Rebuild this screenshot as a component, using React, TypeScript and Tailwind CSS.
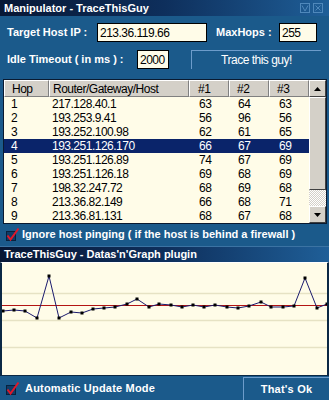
import React from "react";

const rows: [number, string, number, number, number][] = [
  [1, "217.128.40.1", 63, 64, 63],
  [2, "193.253.9.41", 56, 96, 56],
  [3, "193.252.100.98", 62, 61, 65],
  [4, "193.251.126.170", 66, 67, 69],
  [5, "193.251.126.89", 74, 67, 69],
  [6, "193.251.126.18", 69, 68, 69],
  [7, "198.32.247.72", 68, 69, 68],
  [8, "213.36.82.149", 66, 68, 71],
  [9, "213.36.81.131", 68, 67, 68],
];

const pts: [number, number][] = [
  [3, 312], [14, 311], [25, 312], [37, 319], [49, 277], [59, 319], [71, 313], [82, 314],
  [93, 310], [104, 309], [115, 308], [127, 305], [137, 300], [149, 308], [159, 305],
  [171, 306], [182, 308], [193, 306], [204, 308], [215, 306], [227, 308], [238, 309],
  [249, 307], [261, 303], [271, 308], [283, 308], [294, 307], [305, 279], [317, 309], [327, 305],
];

function Check() {
  return (
    <svg width="15" height="15" viewBox="0 0 15 15" className="shrink-0">
      <rect x="1.5" y="4.5" width="9" height="9" fill="#0f3c68" stroke="#08223e" />
      <path d="M2.5 8.5 L5.5 12.5 L13.5 1.5" fill="none" stroke="#e0182a" strokeWidth="2" />
    </svg>
  );
}

function Cell({ w, children, cls = "" }: { w: string; children: React.ReactNode; cls?: string }) {
  return <div className={`${w} shrink-0 overflow-hidden whitespace-nowrap ${cls}`}>{children}</div>;
}

export default function App() {
  const ox = 2;
  const oy = 264;
  const poly = pts.map(([x, y]) => `${x - ox},${y - oy}`).join(" ");
  return (
    <div className="w-[329px] h-[400px] bg-[#1b5a8b] flex flex-col font-['Liberation_Sans',Arial,sans-serif] text-white overflow-hidden">
      {/* Title bar */}
      <div className="h-[16px] shrink-0 flex items-center bg-linear-to-r from-[#071735] via-[#0e2f5c] to-[#1f5f98] pl-[4px] pr-[6px]">
        <span className="text-[11px] font-bold leading-none">Manipulator - TraceThisGuy</span>
        <div className="ml-auto flex gap-[3px]">
          <svg width="10" height="10" viewBox="0 0 10 10">
            <rect x="0.5" y="0.5" width="9" height="9" fill="none" stroke="#4f88bb" />
            <path d="M2 2.5 L5 8 L8 2.5" fill="none" stroke="#4f88bb" />
          </svg>
          <svg width="10" height="10" viewBox="0 0 10 10">
            <rect x="0.5" y="0.5" width="9" height="9" fill="none" stroke="#4f88bb" />
            <path d="M2.5 2.5 L7.5 7.5 M7.5 2.5 L2.5 7.5" fill="none" stroke="#4f88bb" />
          </svg>
        </div>
      </div>

      {/* Row 1 */}
      <div className="mt-[7px] h-[19px] shrink-0 flex items-center pl-[7px]">
        <span className="w-[90px] text-[11px] font-bold leading-none">Target Host IP :</span>
        <div className="w-[110px] h-[19px] bg-[#fffce8] border border-black text-black text-[12px] tracking-[-0.5px] pl-[2px] flex items-center">
          213.36.119.66
        </div>
        <span className="ml-[9px] w-[63px] text-[11px] font-bold leading-none">MaxHops :</span>
        <div className="w-[38px] h-[19px] bg-[#fffce8] border border-black text-black text-[12px] tracking-[-0.5px] pl-[2px] flex items-center">
          255
        </div>
      </div>

      {/* Row 2 */}
      <div className="mt-[8px] h-[19px] shrink-0 flex items-center pl-[7px]">
        <span className="w-[130px] text-[11px] font-bold leading-none">Idle Timeout ( in ms ) :</span>
        <div className="w-[32px] h-[19px] bg-[#fffce8] border border-black text-black text-[12px] tracking-[-0.5px] pl-[2px] flex items-center">
          2000
        </div>
        <div className="ml-[22px] w-[130px] h-[19px] border-t border-l border-[#6d9ccb] flex items-center justify-center text-[12px] tracking-[-0.5px]">
          Trace this guy!
        </div>
      </div>

      {/* List */}
      <div className="mt-[10px] ml-[3px] w-[324px] h-[145px] shrink-0 border border-[#0a1a30] bg-[#fffce8] flex text-[12px] tracking-[-0.5px] text-black leading-none">
        <div className="w-[305px] flex flex-col">
          <div className="h-[17px] flex">
            {[
              ["w-[45px]", "Hop", "pl-[7px]"],
              ["w-[140px]", "Router/Gateway/Host", "pl-[3px]"],
              ["w-[40px]", "#1", "pl-[8px]"],
              ["w-[40px]", "#2", "pl-[7px]"],
              ["w-[40px]", "#3", "pl-[7px]"],
            ].map(([w, t, p]) => (
              <div
                key={t}
                className={`${w} shrink-0 h-[17px] bg-[#d4d0c8] border-t border-l border-t-white border-l-white border-b border-r border-b-[#808080] border-r-[#808080] flex items-center ${p}`}
              >
                {t}
              </div>
            ))}
          </div>
          {rows.map(([h, host, a, b, c]) => {
            const sel = h === 4;
            return (
              <div key={h} className={`h-[14px] flex items-center ${sel ? "bg-[#0a246a] text-white" : ""}`}>
                <Cell w="w-[45px]" cls="pl-[7px]">{h}</Cell>
                <Cell w="w-[140px]" cls="pl-[3px]">{host}</Cell>
                <Cell w="w-[40px]" cls="pl-[10px]">{a}</Cell>
                <Cell w="w-[40px]" cls="pl-[9px]">{b}</Cell>
                <Cell w="w-[40px]" cls="pl-[10px]">{c}</Cell>
              </div>
            );
          })}
        </div>
        {/* Scrollbar */}
        <div className="w-[17px] flex flex-col">
          <div className="h-[17px] bg-[#d4d0c8] border-t border-l border-t-white border-l-white border-b border-r border-b-[#404040] border-r-[#404040] flex items-center justify-center">
            <svg width="7" height="4" viewBox="0 0 7 4">
              <path d="M3.5 0 L7 4 L0 4 Z" fill="#000" />
            </svg>
          </div>
          <div className="h-[93px] bg-[#d4d0c8] border-t border-l border-t-white border-l-white border-b border-r border-b-[#404040] border-r-[#404040]" />
          <div className="h-[16px] bg-[repeating-conic-gradient(#ffffff_0%_25%,#d4d0c8_0%_50%)] bg-[length:2px_2px]" />
          <div className="h-[17px] bg-[#d4d0c8] border-t border-l border-t-white border-l-white border-b border-r border-b-[#404040] border-r-[#404040] flex items-center justify-center">
            <svg width="7" height="4" viewBox="0 0 7 4">
              <path d="M0 0 L7 0 L3.5 4 Z" fill="#000" />
            </svg>
          </div>
        </div>
      </div>

      {/* Checkbox row */}
      <div className="mt-[2px] h-[16px] shrink-0 flex items-center pl-[5px] gap-[2px]">
        <Check />
        <span className="text-[11px] font-bold leading-none">
          Ignore host pinging ( if the host is behind a firewall )
        </span>
      </div>

      {/* Title bar 2 */}
      <div className="mt-[4px] h-[16px] shrink-0 flex items-center border-t border-[#3b73a3] bg-linear-to-r from-[#071735] via-[#0e2f5c] to-[#1f5f98] pl-[4px]">
        <span className="text-[11px] font-bold leading-none">TraceThisGuy - Datas'n'Graph plugin</span>
      </div>

      {/* Graph */}
      <div className="h-[114px] shrink-0 border-t border-t-white border-x-2 border-b border-x-[#0b2845] border-b-[#0b2845] bg-[#fffce8] overflow-hidden">
        <svg width="325" height="112" viewBox="0 0 325 112" className="block">
          {[294, 321, 348].map((y) => (
            <line key={y} x1="0" x2="325" y1={y - oy + 0.5} y2={y - oy + 0.5} stroke="#e6e2c4" strokeWidth="1.5" />
          ))}
          <line x1="0" x2="325" y1={306 - oy + 0.5} y2={306 - oy + 0.5} stroke="#b31414" strokeWidth="1" />
          <polyline points={poly} fill="none" stroke="#1b1b6e" strokeWidth="1" />
          {pts.map(([x, y], i) => (
            <rect key={i} x={x - ox - 1.5} y={y - oy - 1.5} width="3" height="3" fill="#000" />
          ))}
        </svg>
      </div>

      {/* Bottom bar */}
      <div className="flex-1 flex items-stretch">
        <div className="flex items-center pl-[5px] gap-[5px] flex-1">
          <Check />
          <span className="text-[11px] font-bold leading-none tracking-[0.2px]">Automatic Update Mode</span>
        </div>
        <div className="w-[86px] border-t border-l border-[#6d9ccb] mt-[1px] flex items-center justify-center text-[11px] font-bold tracking-[0.2px]">
          That's Ok
        </div>
      </div>
    </div>
  );
}
